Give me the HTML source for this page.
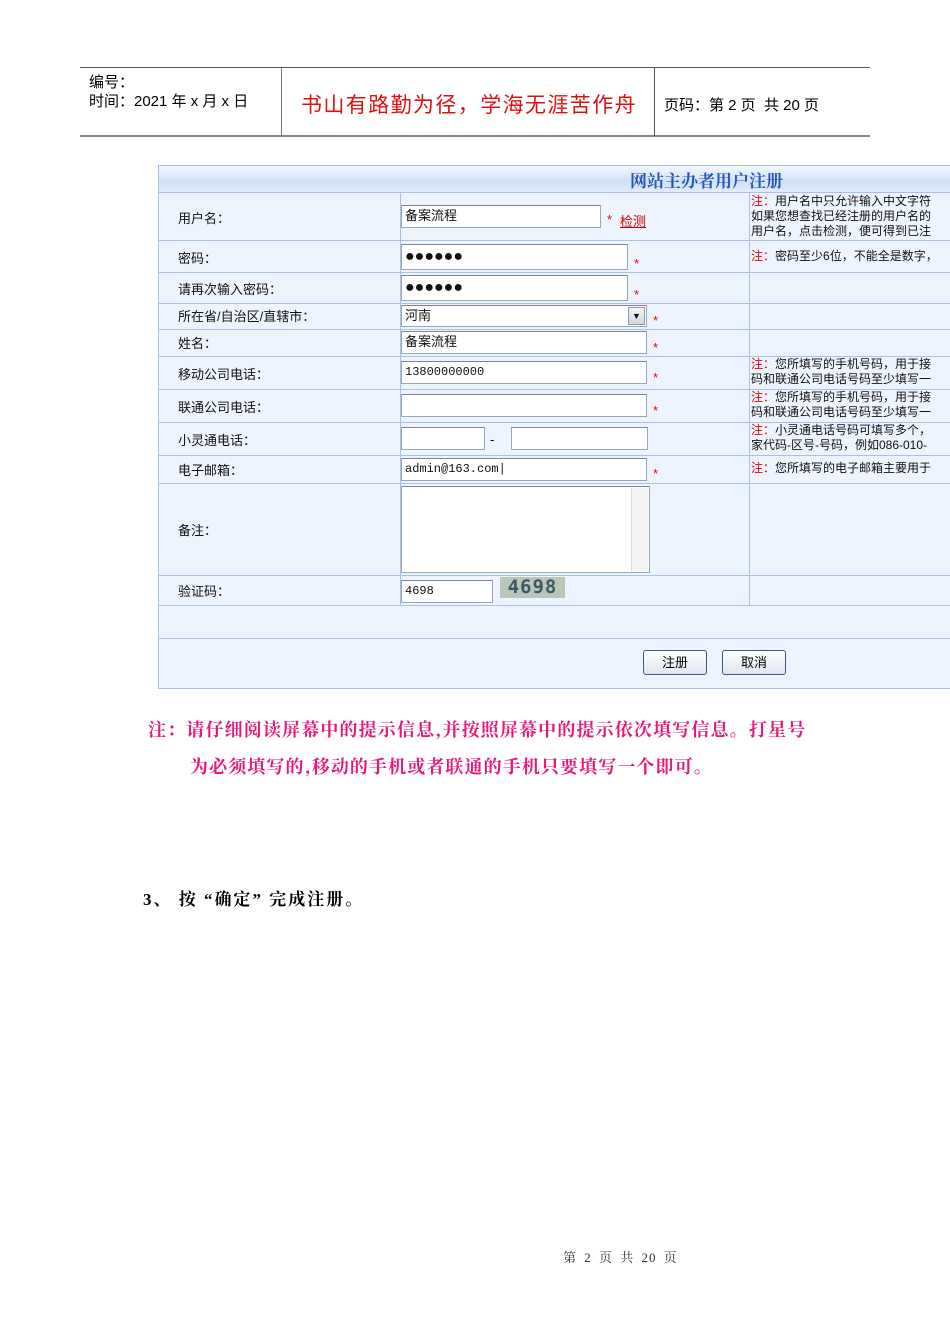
<!DOCTYPE html>
<html><head><meta charset="utf-8"><style>
*{margin:0;padding:0;box-sizing:border-box}
body{width:950px;height:1344px;background:#fff;position:relative;overflow:hidden;font-family:"Liberation Sans","Noto Sans CJK SC",sans-serif;color:#000}
.a{position:absolute;white-space:nowrap}
.hl{position:absolute;height:1px;background:#a9c1e2}
.vl{position:absolute;width:1px;background:#a9c1e2}
.lb{position:absolute;left:178px;font-size:13px;color:#111}
.in{position:absolute;background:#fff;border:1px solid #9aa6b8;border-top-color:#7b8594;font-size:13px;padding-left:3px;line-height:20px;color:#111}
.st{position:absolute;color:#e00;font-size:13px}
.nt{position:absolute;left:751px;font-size:12px;line-height:15px;color:#111;white-space:nowrap}
.nt b{color:#e00;font-weight:normal}
.btn{position:absolute;width:64px;height:25px;border:1px solid #3d5a80;border-radius:3px;background:linear-gradient(#fff,#dfe6f0);font-size:13px;text-align:center;line-height:23px}
</style></head><body>
<div class="a" style="left:80px;top:67px;width:790px;height:1px;background:#555"></div>
<div class="a" style="left:80px;top:135px;width:790px;height:2px;background:#888"></div>
<div class="a" style="left:281px;top:68px;width:1px;height:68px;background:#777"></div>
<div class="a" style="left:654px;top:68px;width:1px;height:68px;background:#555"></div>
<div class="a" style="left:89px;top:71px;font-size:15px">编号：</div>
<div class="a" style="left:89px;top:90px;font-size:15px">时间：2021 年 x 月 x 日</div>
<div class="a" style="left:301px;top:89px;font-size:21px;color:#e01010;letter-spacing:1.4px">书山有路勤为径，学海无涯苦作舟</div>
<div class="a" style="left:664px;top:94px;font-size:15px">页码：第 2 页&nbsp; 共 20 页</div>

<div class="a" style="left:158px;top:165px;width:792px;height:524px;background:#eef4fd;border:1px solid #a9c1e2;border-right:none"></div>
<div class="a" style="left:159px;top:166px;width:791px;height:26px;background:linear-gradient(#f4f8fe,#cfe0f6 60%,#e2ecfa)"></div>
<div class="a" style="left:630px;top:167px;font-size:17px;font-weight:bold;color:#2358b8;font-family:'Noto Serif CJK SC',serif">网站主办者用户注册</div>
<div class="hl" style="left:159px;width:791px;top:192px"></div>
<div class="hl" style="left:159px;width:791px;top:240px"></div>
<div class="hl" style="left:159px;width:791px;top:272px"></div>
<div class="hl" style="left:159px;width:791px;top:303px"></div>
<div class="hl" style="left:159px;width:791px;top:329px"></div>
<div class="hl" style="left:159px;width:791px;top:356px"></div>
<div class="hl" style="left:159px;width:791px;top:389px"></div>
<div class="hl" style="left:159px;width:791px;top:422px"></div>
<div class="hl" style="left:159px;width:791px;top:455px"></div>
<div class="hl" style="left:159px;width:791px;top:483px"></div>
<div class="hl" style="left:159px;width:791px;top:575px"></div>
<div class="hl" style="left:159px;width:791px;top:605px"></div>
<div class="hl" style="left:159px;width:791px;top:638px"></div>
<div class="vl" style="left:400px;top:192px;height:413px"></div>
<div class="vl" style="left:749px;top:192px;height:413px"></div>

<div class="lb" style="top:208px">用户名：</div>
<div class="lb" style="top:248px">密码：</div>
<div class="lb" style="top:279px">请再次输入密码：</div>
<div class="lb" style="top:306px">所在省/自治区/直辖市：</div>
<div class="lb" style="top:333px">姓名：</div>
<div class="lb" style="top:364px">移动公司电话：</div>
<div class="lb" style="top:397px">联通公司电话：</div>
<div class="lb" style="top:430px">小灵通电话：</div>
<div class="lb" style="top:460px">电子邮箱：</div>
<div class="lb" style="top:520px">备注：</div>
<div class="lb" style="top:581px">验证码：</div>

<div class="in" style="left:401px;top:205px;width:200px;height:23px">备案流程</div>
<div class="st" style="left:607px;top:212px">*</div>
<div class="a" style="left:620px;top:211px;font-size:13px;color:#c00;text-decoration:underline">检测</div>
<div class="in" style="left:401px;top:244px;width:227px;height:26px;font-size:16px;line-height:24px">●●●●●●</div>
<div class="st" style="left:634px;top:256px">*</div>
<div class="in" style="left:401px;top:275px;width:227px;height:26px;font-size:16px;line-height:24px">●●●●●●</div>
<div class="st" style="left:634px;top:287px">*</div>
<div class="in" style="left:401px;top:305px;width:246px;height:22px;line-height:19px">河南<span style="position:absolute;right:1px;top:1px;width:17px;height:18px;border:1px solid #8a99b0;background:linear-gradient(#f6f6f6,#cfd6e0);font-size:9px;text-align:center;line-height:16px">▼</span></div>
<div class="st" style="left:653px;top:313px">*</div>
<div class="in" style="left:401px;top:331px;width:246px;height:23px">备案流程</div>
<div class="st" style="left:653px;top:340px">*</div>
<div class="in" style="left:401px;top:361px;width:246px;height:23px;font-family:'Liberation Mono',monospace;font-size:12px">13800000000</div>
<div class="st" style="left:653px;top:370px">*</div>
<div class="in" style="left:401px;top:394px;width:246px;height:23px"></div>
<div class="st" style="left:653px;top:403px">*</div>
<div class="in" style="left:401px;top:427px;width:84px;height:23px"></div>
<div class="a" style="left:490px;top:432px;font-size:13px">-</div>
<div class="in" style="left:511px;top:427px;width:137px;height:23px"></div>
<div class="in" style="left:401px;top:458px;width:246px;height:23px;font-family:'Liberation Mono',monospace;font-size:12px">admin@163.com|</div>
<div class="st" style="left:653px;top:466px">*</div>
<div class="in" style="left:401px;top:486px;width:249px;height:87px"><span style="position:absolute;right:1px;top:1px;width:17px;height:83px;background:#f3f3f3;border-left:1px solid #ddd"></span></div>
<div class="in" style="left:401px;top:580px;width:92px;height:23px;font-family:'Liberation Mono',monospace;font-size:12px">4698</div>
<div class="a" style="left:500px;top:577px;width:65px;height:21px;background:#b9c6b8;font-family:'DejaVu Sans Mono',monospace;font-weight:bold;font-size:19px;line-height:21px;text-align:center;color:#3b5a66;letter-spacing:1px">4698</div>

<div class="nt" style="top:194px"><b>注：</b>用户名中只允许输入中文字符<br>如果您想查找已经注册的用户名的<br>用户名，点击检测，便可得到已注</div>
<div class="nt" style="top:249px"><b>注：</b>密码至少6位，不能全是数字，</div>
<div class="nt" style="top:357px"><b>注：</b>您所填写的手机号码，用于接<br>码和联通公司电话号码至少填写一</div>
<div class="nt" style="top:390px"><b>注：</b>您所填写的手机号码，用于接<br>码和联通公司电话号码至少填写一</div>
<div class="nt" style="top:423px"><b>注：</b>小灵通电话号码可填写多个，<br>家代码-区号-号码，例如086-010-</div>
<div class="nt" style="top:461px"><b>注：</b>您所填写的电子邮箱主要用于</div>

<div class="btn" style="left:643px;top:650px">注册</div>
<div class="btn" style="left:722px;top:650px">取消</div>

<div class="a" style="left:148px;top:716px;font-size:18px;font-weight:bold;color:#e8177a;font-family:'Noto Serif CJK SC',serif;letter-spacing:1.15px">注：请仔细阅读屏幕中的提示信息,并按照屏幕中的提示依次填写信息。打星号</div>
<div class="a" style="left:190px;top:753px;font-size:18px;font-weight:bold;color:#e8177a;font-family:'Noto Serif CJK SC',serif;letter-spacing:1.1px">为必须填写的,移动的手机或者联通的手机只要填写一个即可。</div>
<div class="a" style="left:143px;top:885px;font-size:17px;font-weight:bold;font-family:'Liberation Serif','Noto Serif CJK SC',serif;letter-spacing:2px">3、 按 “确定” 完成注册。</div>
<div class="a" style="left:563px;top:1247px;font-size:13px;font-family:'Liberation Serif','Noto Serif CJK SC',serif;color:#333;word-spacing:3px;letter-spacing:1px">第 2 页 共 20 页</div>
</body></html>
